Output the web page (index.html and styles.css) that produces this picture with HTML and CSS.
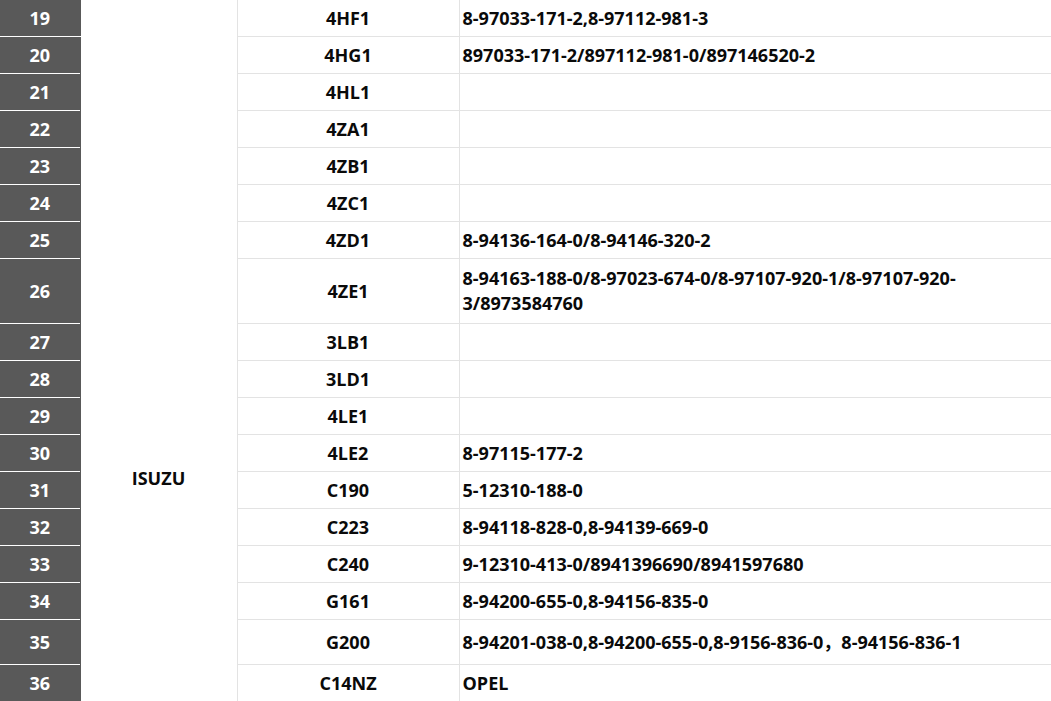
FILE: index.html
```html
<!DOCTYPE html>
<html lang="en">
<head>
<meta charset="utf-8">
<title>Engine parts</title>
<link rel="stylesheet" href="styles.css">
</head>
<body>
<table class="parts">
  <colgroup>
    <col class="c-no">
    <col class="c-brand">
    <col class="c-model">
    <col class="c-oem">
  </colgroup>
  <tbody>
    <tr><td class="no">19</td><td class="brand" rowspan="18">ISUZU</td><td class="model">4HF1</td><td class="oem">8-97033-171-2,8-97112-981-3</td></tr>
    <tr><td class="no">20</td><td class="model">4HG1</td><td class="oem">897033-171-2/897112-981-0/897146520-2</td></tr>
    <tr><td class="no">21</td><td class="model">4HL1</td><td class="oem"></td></tr>
    <tr><td class="no">22</td><td class="model">4ZA1</td><td class="oem"></td></tr>
    <tr><td class="no">23</td><td class="model">4ZB1</td><td class="oem"></td></tr>
    <tr><td class="no">24</td><td class="model">4ZC1</td><td class="oem"></td></tr>
    <tr><td class="no">25</td><td class="model">4ZD1</td><td class="oem">8-94136-164-0/8-94146-320-2</td></tr>
    <tr class="wrap"><td class="no">26</td><td class="model">4ZE1</td><td class="oem">8-94163-188-0/8-97023-674-0/8-97107-920-1/8-97107-920-3/8973584760</td></tr>
    <tr><td class="no">27</td><td class="model">3LB1</td><td class="oem"></td></tr>
    <tr><td class="no">28</td><td class="model">3LD1</td><td class="oem"></td></tr>
    <tr><td class="no">29</td><td class="model">4LE1</td><td class="oem"></td></tr>
    <tr><td class="no">30</td><td class="model">4LE2</td><td class="oem">8-97115-177-2</td></tr>
    <tr><td class="no">31</td><td class="model">C190</td><td class="oem">5-12310-188-0</td></tr>
    <tr><td class="no">32</td><td class="model">C223</td><td class="oem">8-94118-828-0,8-94139-669-0</td></tr>
    <tr><td class="no">33</td><td class="model">C240</td><td class="oem">9-12310-413-0/8941396690/8941597680</td></tr>
    <tr><td class="no">34</td><td class="model">G161</td><td class="oem">8-94200-655-0,8-94156-835-0</td></tr>
    <tr class="tall"><td class="no">35</td><td class="model">G200</td><td class="oem">8-94201-038-0,8-94200-655-0,8-9156-836-0，8-94156-836-1</td></tr>
    <tr><td class="no">36</td><td class="model">C14NZ</td><td class="oem">OPEL</td></tr>
  </tbody>
</table>
</body>
</html>
```

FILE: styles.css
```css
html, body {
  margin: 0;
  padding: 0;
  background: #ffffff;
}

body {
  font-family: "Open Sans", "Noto Sans", "Noto Sans CJK SC", sans-serif;
  font-weight: 700;
  font-size: 18px;
  color: #0a0a0a;
  overflow: hidden;
}

.parts {
  width: 1051px;
  border-collapse: collapse;
  table-layout: fixed;
  margin-top: -1px;
}

.c-no { width: 80px; }
.c-brand { width: 157px; }
.c-model { width: 222px; }
.c-oem { width: 592px; }

.parts td {
  border: 1px solid #e3e3e3;
  line-height: 25px;
  padding: 5px 4px;
  height: 26px;
  vertical-align: middle;
}

.parts td.no {
  background: #595959;
  color: #ffffff;
  text-align: center;
  border-left: none;
  border-top: 1px solid #ffffff;
  border-bottom: 1px solid #ffffff;
  border-right: 1px solid #595959;
}

.parts td.brand {
  text-align: center;
  vertical-align: top;
  padding-top: 466px;
  border-top: none;
  border-bottom: none;
  border-left: 1px solid #595959;
}

.parts td.model {
  text-align: center;
}

.parts td.oem {
  text-align: left;
  padding-left: 3px;
  padding-right: 12px;
}

.parts tr.wrap td {
  padding-top: 7px;
  padding-bottom: 7px;
}

.parts tr.tall td {
  height: 34px;
}
```
